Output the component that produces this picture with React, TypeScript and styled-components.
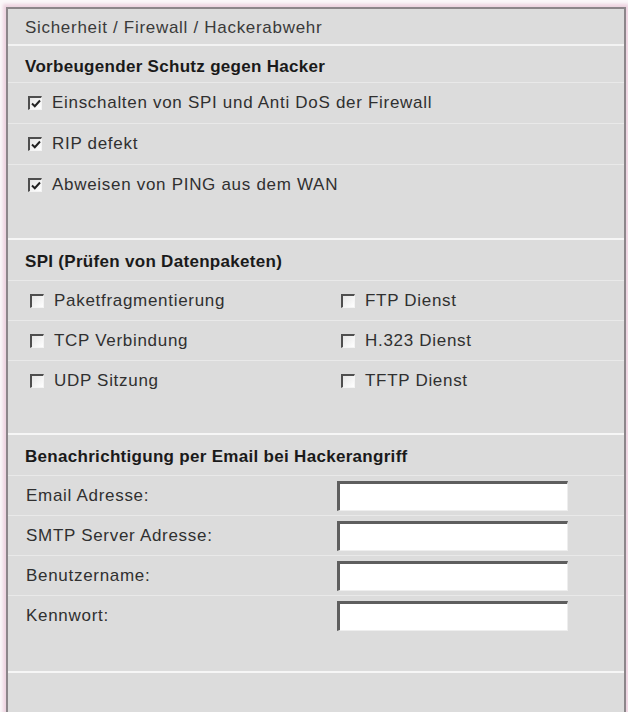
import React from "react";
import styled, { createGlobalStyle } from "styled-components";

const Global = createGlobalStyle`
  html, body { margin: 0; padding: 0; background: #fbf7f9; }
  body { font-family: "Liberation Sans", Arial, sans-serif; overflow: hidden; }
`;

const Frame = styled.div`
  margin: 7px 0 0 6px;
  width: 616px;
  min-height: 720px;
  border: 2px solid #8c868a;
  box-shadow: 0 0 3px 3px #edd3e0;
  background: #dcdcdc;
  display: flex;
  flex-direction: column;
`;

const Header = styled.div`
  height: 37px;
  display: flex;
  align-items: center;
  padding: 2px 0 0 17px;
  box-sizing: border-box;
  font-size: 17px;
  letter-spacing: 0.7px;
  color: #3a3a3a;
  border-bottom: 2px solid #f3f3f3;
`;

const Section = styled.div<{ $filler: number }>`
  display: flex;
  flex-direction: column;
  padding-bottom: ${(p) => p.$filler}px;
  border-bottom: 2px solid #f6f6f6;
`;

const Title = styled.div<{ $h: number; $pt: number }>`
  height: ${(p) => p.$h}px;
  padding: ${(p) => p.$pt}px 0 0 17px;
  box-sizing: border-box;
  display: flex;
  align-items: center;
  font-weight: bold;
  font-size: 17px;
  letter-spacing: 0.3px;
  color: #1a1a1a;
`;

const Row = styled.div<{ $h: number; $pl: number }>`
  height: ${(p) => p.$h}px;
  box-sizing: border-box;
  padding-left: ${(p) => p.$pl}px;
  display: flex;
  align-items: center;
  border-top: 1px solid #e9e9e9;
`;

const GridRow = styled(Row)`
  display: grid;
  grid-template-columns: 311px 1fr;
  align-items: center;
`;

const FormRow = styled(Row)`
  display: grid;
  grid-template-columns: 311px 231px;
  align-items: center;
`;

const CheckItem = styled.label`
  display: flex;
  align-items: center;
  gap: 10px;
  font-size: 17px;
  letter-spacing: 0.7px;
  color: #303030;
`;

const Box = styled.span`
  width: 14px;
  height: 14px;
  box-sizing: border-box;
  border-top: 2px solid #4e4e4e;
  border-left: 2px solid #4e4e4e;
  border-right: 1px solid #f4f4f4;
  border-bottom: 1px solid #f4f4f4;
  background: linear-gradient(135deg, #e6e6e6, #ffffff);
  display: flex;
  align-items: center;
  justify-content: center;
  flex: none;
`;

const Label = styled.span`
  font-size: 17px;
  letter-spacing: 0.7px;
  color: #303030;
`;

const Input = styled.input`
  width: 231px;
  height: 30px;
  box-sizing: border-box;
  background: #ffffff;
  border-top: 3px solid #5e5e5e;
  border-left: 3px solid #5e5e5e;
  border-right: 1px solid #eeeeee;
  border-bottom: 1px solid #eeeeee;
  outline: none;
  padding: 0 4px;
`;

const Bottom = styled.div`
  flex: 1;
`;

const Check = ({ checked, label }: { checked: boolean; label: string }) => (
  <CheckItem>
    <Box>
      {checked && (
        <svg width="10" height="9" viewBox="0 0 10 9">
          <path d="M1 4.5 L3.8 7.2 L9 1.5" stroke="#222" strokeWidth="2" fill="none" />
        </svg>
      )}
    </Box>
    {label}
  </CheckItem>
);

export default function App() {
  return (
    <>
      <Global />
      <Frame>
        <Header>Sicherheit / Firewall / Hackerabwehr</Header>
        <Section $filler={33}>
          <Title $h={36} $pt={6}>Vorbeugender Schutz gegen Hacker</Title>
          <Row $h={41} $pl={20}>
            <Check checked label="Einschalten von SPI und Anti DoS der Firewall" />
          </Row>
          <Row $h={41} $pl={20}>
            <Check checked label="RIP defekt" />
          </Row>
          <Row $h={41} $pl={20}>
            <Check checked label="Abweisen von PING aus dem WAN" />
          </Row>
        </Section>
        <Section $filler={33}>
          <Title $h={40} $pt={4}>SPI (Prüfen von Datenpaketen)</Title>
          <GridRow $h={40} $pl={22}>
            <Check checked={false} label="Paketfragmentierung" />
            <Check checked={false} label="FTP Dienst" />
          </GridRow>
          <GridRow $h={40} $pl={22}>
            <Check checked={false} label="TCP Verbindung" />
            <Check checked={false} label="H.323 Dienst" />
          </GridRow>
          <GridRow $h={40} $pl={22}>
            <Check checked={false} label="UDP Sitzung" />
            <Check checked={false} label="TFTP Dienst" />
          </GridRow>
        </Section>
        <Section $filler={36}>
          <Title $h={40} $pt={4}>Benachrichtigung per Email bei Hackerangriff</Title>
          <FormRow $h={40} $pl={18}>
            <Label>Email Adresse:</Label>
            <Input />
          </FormRow>
          <FormRow $h={40} $pl={18}>
            <Label>SMTP Server Adresse:</Label>
            <Input />
          </FormRow>
          <FormRow $h={40} $pl={18}>
            <Label>Benutzername:</Label>
            <Input />
          </FormRow>
          <FormRow $h={40} $pl={18}>
            <Label>Kennwort:</Label>
            <Input type="password" />
          </FormRow>
        </Section>
        <Bottom />
      </Frame>
    </>
  );
}
